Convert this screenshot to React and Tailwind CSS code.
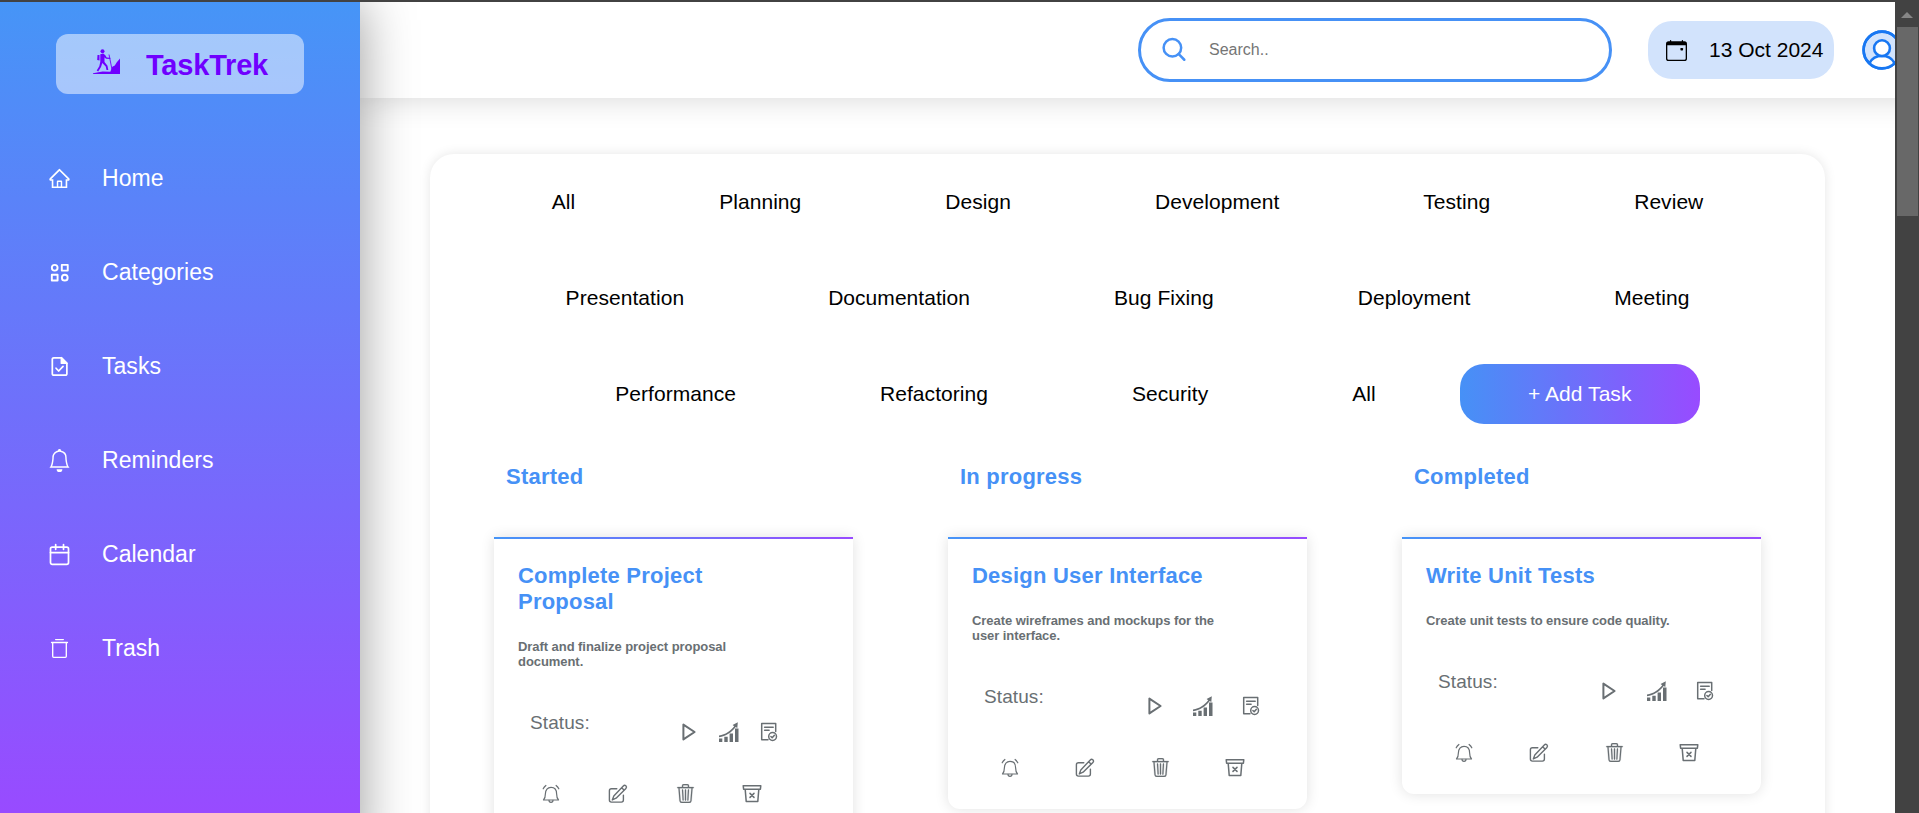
import { AiOutlineHome } from "react-icons/ai";
import { BsBell, BsCalendarEvent, BsTrash3 } from "react-icons/bs";

function Line({ size = 24, width = 1.4, className = "", children }) {
  return (
    <svg
      width={size}
      height={size}
      viewBox="0 0 24 24"
      fill="none"
      stroke="currentColor"
      strokeWidth={width}
      strokeLinejoin="round"
      strokeLinecap="round"
      className={className}
    >
      {children}
    </svg>
  );
}

const CategoryIcon = () => (
  <Line width={2} size={23}>
    <circle cx="7" cy="7" r="3" />
    <rect x="14.4" y="4" width="6.2" height="6" />
    <rect x="4" y="14.4" width="6" height="6" />
    <circle cx="17.5" cy="17.4" r="3" />
  </Line>
);

const TaskIcon = () => (
  <Line width={1.8} size={23}>
    <path d="M14 2.9H6A1.500 1.500 0 0 0 4.500 4.400v15.200A1.500 1.500 0 0 0 6 21.100h12.200a1.500 1.500 0 0 0 1.500-1.500V8.600z" />
    <path d="M14 2.900v5.700h5.700z" fill="currentColor" />
    <path d="M8.400 13.800l2.700 2.900 4.600-4.900" />
  </Line>
);

const CalendarIcon = () => (
  <Line width={1.8} size={23}>
    <rect x="2.6" y="4.2" width="18.8" height="18" rx="1.8" />
    <path d="M2.6 10h18.8M8 1.6v5M16.2 1.6v5" />
  </Line>
);

const BinIcon = () => (
  <Line width={1.400} size={23}>
    <path d="M8 2.700h8M3.700 5.700h16.600M4.900 5.700v14.500a1 1 0 0 0 1 1h12.200a1 1 0 0 0 1-1V5.700" />
  </Line>
);

const SearchIcon = () => (
  <Line width={2.3} size={26}>
    <circle cx="9.6" cy="9.9" r="8.1" />
    <path d="M15.500 15.900l5.100 5.100" />
  </Line>
);

const AvatarIcon = () => (
  <svg width="40" height="40" viewBox="0 0 40 40" fill="none" stroke="#1877f2" strokeWidth="2.6" className="ml-7 shrink-0">
    <circle cx="20" cy="20" r="18.4" fill="#d2e3fc" />
    <path d="M7.5 33.2C10 28.3 14.6 25.8 20 25.8s10 2.5 12.5 7.4A18.4 18.4 0 0 1 7.5 33.2z" fill="#fff" stroke="none" />
    <path d="M7.5 33.2C10 28.3 14.6 25.8 20 25.8s10 2.5 12.5 7.4" />
    <circle cx="20" cy="18.2" r="7.9" fill="#fff" />
    <circle cx="20" cy="20" r="18.4" />
  </svg>
);

const HikerIcon = () => (
  <svg width="28" height="26" viewBox="0 0 28 26" fill="currentColor">
    <circle cx="9.5" cy="2.2" r="2" />
    <path d="M4.5 6h2v5.5l-2.300-.6z" />
    <path d="M7.300 5.200l3-.6 2 1.600 1.400 2.200 3.600.3v1.200l-4.300-.1-1.500-1.500v4.700l3 3.800.8 4.300h-1.800l-.8-3.500-3.400-3.500-1.300 4-2.800 4.300-1.500-.9 2.600-4.200 1-4.500z" />
    <path d="M16 5.500l3.200 16" fill="none" stroke="currentColor" strokeWidth=".9" />
    <path d="M0 25v-.8l9.500-1.800 7.800.4 2-5 2.500-1.200 2-3.400L27 9.500V25z" />
  </svg>
);

const PlayIcon = () => (
  <Line width={2}>
    <path d="M6.400 4.600v14.800L17.600 12z" />
  </Line>
);

const ChartIcon = () => (
  <svg width="24" height="24" viewBox="0 0 24 24" fill="currentColor">
    <path d="M2 18.600h3.300V22H2zM7.300 16.800h3.400V22H7.300zM12.600 13.400H16V22h-3.400zM18 8.400h3.500V22H18z" />
    <path d="M2 15.500c6.500-1 11.500-4.300 15.200-9.200l-1.600-1.200L20.800 2.200l-.5 5.900-1.600-1.100C14.500 12.500 9 16.200 2 17.200z" />
  </svg>
);

const VerifiedIcon = () => (
  <Line width={1.5}>
    <path d="M11 19.800H4.700V3.600h14V11.500M7.600 7.300h8.600M7.600 10.200h4.500" />
    <circle cx="15.600" cy="16.500" r="3.900" />
    <path d="M13.900 16.500l1.300 1.300 2.200-2.500" />
  </Line>
);

const AlarmIcon = () => (
  <Line width={1.2}>
    <path d="M4.500 18c1.500-1.700 1.900-3.700 1.900-6.200 0-4 2.200-6.500 5.600-6.500s5.600 2.500 5.600 6.500c0 2.500.4 4.500 1.900 6.200z" />
    <path d="M10 18.300a2 2 0 0 0 4 0M4.200 6.800a9 9 0 0 1 2.700-3.300M19.800 6.800a9 9 0 0 0-2.700-3.300" />
  </Line>
);

const EditIcon = () => (
  <Line width={1.4}>
    <path d="M10.800 6.800H5.400a2 2 0 0 0-2 2v9.300a2 2 0 0 0 2 2h10a2 2 0 0 0 2-2v-5" />
    <path d="M17.300 3.900a1.700 1.700 0 0 1 2.600 2.500L10.100 16.200l-3.800 1.700 1.500-4zM15.700 5.700l2.500 2.500" />
  </Line>
);

const TrashIcon = () => (
  <span className="flex size-6 items-start justify-center pt-0.5">
    <BsTrash3 size={19} strokeWidth={0.2} />
  </span>
);

const ArchiveIcon = () => (
  <Line width={1.5}>
    <path d="M3.200 3.700h17.600l-.4 3.500H3.600zM5.200 7.400l1 12h11.600l1-12M10 11.400l4 4M14 11.400l-4 4" />
  </Line>
);

const nav = [
  { label: "Home", Icon: AiOutlineHome },
  { label: "Categories", Icon: CategoryIcon },
  { label: "Tasks", Icon: TaskIcon },
  { label: "Reminders", Icon: BsBell },
  { label: "Calendar", Icon: CalendarIcon },
  { label: "Trash", Icon: BinIcon },
];

const filters = [
  ["All", "Planning", "Design", "Development", "Testing", "Review"],
  ["Presentation", "Documentation", "Bug Fixing", "Deployment", "Meeting"],
  ["Performance", "Refactoring", "Security", "All"],
];

const columns = [
  { heading: "Started", title: "Complete Project Proposal", text: "Draft and finalize project proposal document.", compact: true },
  { heading: "In progress", title: "Design User Interface", text: "Create wireframes and mockups for the user interface." },
  { heading: "Completed", title: "Write Unit Tests", text: "Create unit tests to ensure code quality." },
];

function Sidebar() {
  return (
    <aside className="relative z-20 flex h-[860px] w-[360px] shrink-0 flex-col bg-linear-to-b/srgb from-[#4695f7] to-[#984bff] to-94% shadow-[0_0_50px_rgba(0,0,0,0.4)]">
      <div className="mx-auto mt-8 flex h-[60px] w-[248px] shrink-0 items-center rounded-xl bg-white/50 pl-[37px] text-[#6f00ff]">
        <div className="pb-1">
          <HikerIcon />
        </div>
        <span className="ml-[25px] pt-[3px] text-[29px] font-bold tracking-[-0.2px]">TaskTrek</span>
      </div>
      <nav className="mt-[37px] flex flex-col pl-12 text-white">
        {nav.map(({ label, Icon }) => (
          <a key={label} className="flex h-[94px] items-center gap-[31px] text-[23px] tracking-[0.03px]">
            <Icon size={23} />
            {label}
          </a>
        ))}
      </nav>
    </aside>
  );
}

function Header() {
  return (
    <header className="relative z-10 flex h-24 w-[1600px] items-center bg-white pl-[778px] shadow-[0_0_30px_rgba(0,0,0,0.16)]">
      <div className="flex h-16 w-[474px] shrink-0 items-center rounded-[32px] border-3 border-[#4691f6] pl-[21px] text-[#4691f6]">
        <SearchIcon />
        <span className="ml-[21px] text-base text-[#757575]">Search..</span>
      </div>
      <div className="ml-9 flex h-[58px] w-[186px] shrink-0 items-center rounded-[24px] bg-[#d2e3fc] pl-[18px] text-[21px]">
        <BsCalendarEvent size={21} className="shrink-0" />
        <span className="ml-[22px] whitespace-nowrap">13 Oct 2024</span>
      </div>
      <AvatarIcon />
    </header>
  );
}

function Card({ title, text, compact }) {
  return (
    <article className="w-[359px] rounded-b-xl bg-white pb-[29px] text-[#696f73] shadow-[0_0_14px_rgba(0,0,0,0.12)]">
      <div className="h-0.5 bg-linear-to-r/srgb from-[#4695f7] to-[#984bff]" />
      <h3 className="ml-6 mt-6 w-[250px] text-[22px] font-bold leading-[26px] tracking-[0.22px] text-[#4691f6]">{title}</h3>
      <p className="ml-6 mt-6 w-[255px] text-[13px] font-bold leading-[15px] tracking-[-0.06px]">{text}</p>
      <div className={`mt-[41px] flex h-[34px] items-end pl-9 ${compact ? "gap-4" : "gap-6"}`}>
        <span className={`self-start pt-px text-[19px] leading-6 tracking-[0.1px] ${compact ? "w-[131px]" : "w-[135px]"}`}>Status:</span>
        <PlayIcon />
        <ChartIcon />
        <VerifiedIcon />
      </div>
      <div className={`mt-[38px] flex ${compact ? "gap-[43px] pl-[45px]" : "gap-[51px] pl-[50px]"}`}>
        <AlarmIcon />
        <EditIcon />
        <TrashIcon />
        <ArchiveIcon />
      </div>
    </article>
  );
}

function Scrollbar() {
  return (
    <div className="flex w-6 shrink-0 flex-col items-center bg-[#424242] pt-2.5">
      <svg width="12" height="6" viewBox="0 0 12 6" fill="#868686">
        <path d="M0 6L6 0l6 6z" />
      </svg>
      <div className="mt-[9px] h-[189px] w-[21px] bg-[#686868]" />
    </div>
  );
}

export default function App() {
  return (
    <div className="flex h-[813px] flex-col overflow-hidden bg-white font-['Liberation_Sans',Arial,sans-serif] text-black">
      <div className="h-0.5 shrink-0 bg-[#424242]" />
      <div className="flex min-h-0 flex-1">
        <div className="flex min-w-0 flex-1 overflow-hidden">
          <Sidebar />
          <div className="min-w-0 flex-1">
            <Header />
            <main className="ml-[70px] mt-14 h-[900px] w-[1395px] rounded-3xl shadow-[0_0_12px_rgba(0,0,0,0.1)]">
              {filters.map((row, i) => (
                <div key={i} className="flex h-24 items-center justify-center gap-[144px] text-[21px] tracking-[0.05px]">
                  {row.map((name, j) => (
                    <span key={j}>{name}</span>
                  ))}
                  {i === 2 && (
                    <button className="-mx-[60px] h-[60px] w-60 rounded-3xl bg-linear-to-r/srgb from-[#4691f6] to-[#984bff] text-white">
                      + Add Task
                    </button>
                  )}
                </div>
              ))}
              <div className="mt-[18px] flex gap-[95px] pl-16">
                {columns.map((c) => (
                  <section key={c.heading}>
                    <h2 className="mb-11 ml-3 text-[22px] font-bold leading-[33px] tracking-[0.22px] text-[#4691f6]">{c.heading}</h2>
                    <Card {...c} />
                  </section>
                ))}
              </div>
            </main>
          </div>
        </div>
        <Scrollbar />
      </div>
    </div>
  );
}
